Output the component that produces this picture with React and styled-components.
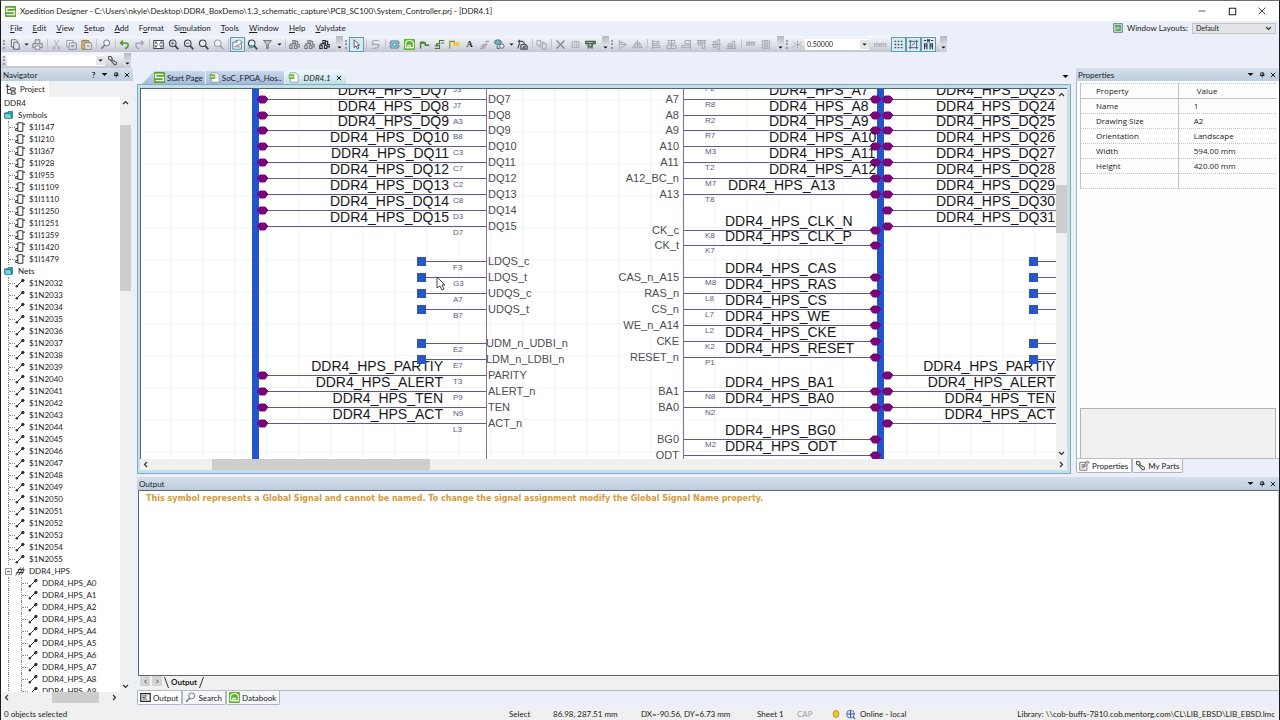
import React, { useState } from "react";
import styled, { createGlobalStyle, css } from "styled-components";

const GlobalStyle = createGlobalStyle`
  * { box-sizing: border-box; }
  body {
    margin: 0;
    overflow: hidden;
    font: 8px/12px Lato, "Open Sans", sans-serif;
    color: #1b1b20;
    background: #ebeffa;
  }
  button, input, select {
    margin: 0;
    padding: 0;
    border: 0;
    background: none;
    font: inherit;
    color: inherit;
  }
  ul { list-style: none; margin: 0; padding: 0; }
  svg { display: block; flex: none; }
`;

// ---------- icons ----------

const dark = "#3c4450";
const grey = "#a3a6b2";
const green = "#5fb52c";

const glass = (color, inner) => (
  <>
    <circle cx="6" cy="5.5" r="4.2" fill="#e8f0f8" stroke={color} strokeWidth="1.4" />
    <path d="M9 8.500 13 13" stroke={color} strokeWidth="2.200" />
    {inner}
  </>
);

const flow = (color) => (
  <path
    d="M1 12h3V8H1zM7 12h3V8H7zM5 5h3V2H5zM2.5 8V6h6v2M8 3h3v4h2v3h-3"
    fill="none"
    stroke={color}
    strokeWidth="1.4"
  />
);

const align = (d) => <path d={d} fill="none" stroke={grey} strokeWidth="1.2" />;

const shapes = {
  logo: (
    <>
      <rect x="0" y="0" width="14" height="14" rx="1" fill="#53a928" />
      <path d="M2 3h10M2 3v4h10v4H2" stroke="#fff" strokeWidth="1.700" fill="none" />
    </>
  ),
  pages: (
    <>
      <path d="M3 1h6l2 2v7H3z" fill="#fff" stroke={dark} />
      <path d="M6 4h4l3 3v6H6z" fill="#dfe6ee" stroke={dark} />
    </>
  ),
  printer: (
    <>
      <path d="M4 6V1h6v5M1 6h12v5H1z" fill="#d8dde4" stroke="#666c78" />
      <path d="M4 9h6v4H4z" fill="#fff" stroke="#666c78" />
    </>
  ),
  cut: <path d="M4 1l5 9M10 1L5 10M3 10h2v3H3zM9 10h2v3H9z" fill="none" stroke={grey} />,
  copy: (
    <>
      <path d="M1 2h8v8H1z" fill="#fff" stroke="#7b8290" />
      <path d="M4 5h9v8H4zM6 8h5M6 10h5" fill="#eef1f5" stroke="#6a7280" />
    </>
  ),
  paste: (
    <>
      <path d="M1 2h9v11H1z" fill="#d9b469" stroke="#8d7443" />
      <path d="M3 1h5v2H3z" fill="#888" />
      <path d="M5 5h8v8H5zM7 8h4M7 10h4" fill="#fff" stroke="#6a7280" />
    </>
  ),
  find: (
    <>
      <circle cx="8.5" cy="5" r="3.8" fill="#eef4fa" stroke="#6b7280" strokeWidth="1.2" />
      <path d="M6 8 1.5 12.5" stroke="#6b7280" strokeWidth="1.8" />
    </>
  ),
  undo: <path d="M5 2 2 5l3 3M2.5 5h6q4 0 3 4-1 3-4 3" fill="none" stroke="#4e9a2c" strokeWidth="2" />,
  redo: <path d="M9 2l3 3-3 3M11.5 5h-6q-4 0-3 4 1 3 4 3" fill="none" stroke={grey} strokeWidth="1.8" />,
  fit: (
    <>
      <path d="M1 2h12v10H1z" fill="#fff" stroke={dark} strokeWidth="1.3" />
      <path d="M3 4l3 2.5M11 4 8 6.5M3 10l3-2.5M11 10 8 7.5M3 6V4h2M9 4h2v2M3 8v2h2M9 10h2V8" stroke={dark} fill="none" />
    </>
  ),
  zoomIn: glass(dark, <path d="M6 3.5v4M4 5.5h4" stroke={dark} />),
  zoomOut: glass(dark, <path d="M4 5.5h4" stroke={dark} />),
  zoom: glass(dark),
  zoomGrey: glass(grey),
  zoomSel: glass(dark, <path d="M1 12l5-5 3 4z" fill="#4aa3a0" />),
  panel: (
    <>
      <path d="M1 4h11v9H1z" fill="#f4f7fa" stroke="#55606c" />
      <path d="M5 4V2h3M9 1l4 3-5 4H5M3 10h7" fill="#fff" stroke="#55606c" />
    </>
  ),
  filter: <path d="M2 2h10L8 7v5H6V7z" fill="#bfc4cd" stroke="#555c68" />,
  flowGrey: flow("#777c88"),
  flowDark: flow("#24282f"),
  pointer: <path d="M4 1v10l2.5-2.3L8 12.5l2-.9-1.700-3.600H11z" fill="#fff" stroke="#333" />,
  swap: <path d="M11 2H6Q2 2 3 5q1 2 5 2t3 3q-1 2-8 2M2 7h10" fill="none" stroke={grey} strokeWidth="1.4" />,
  chip: (
    <>
      <rect x="2.500" y="2.500" width="9" height="9" fill="#a5dbe8" stroke="#2b6f80" />
      <path d="M0 5h2M0 9h2M12 5h2M12 9h2M5 5h4v4H5z" stroke="#2b6f80" fill="#e7f7fb" />
    </>
  ),
  databook: (
    <>
      <rect x="0" y="0" width="14" height="14" rx="1" fill={green} />
      <path d="M2 11V6q0-4 5-4 5 0 5 4v6M5 12V8h3v4M2 11h10" stroke="#fff" strokeWidth="1.4" fill="none" />
    </>
  ),
  net: <path d="M2 12V4M2 5h6v3h5M2 4h5" fill="none" stroke="#447a36" strokeWidth="1.8" />,
  bus: <path d="M1 12h6V8H3V6h4V2h6M1 9h4M9 5h4" fill="none" stroke="#447a36" strokeWidth="1.4" />,
  netName: (
    <>
      <path d="M1 12V3h6v3h6" fill="none" stroke="#7d8c2c" strokeWidth="1.4" />
      <path d="M5 4h8v5H5z" fill="#e9cc4a" />
    </>
  ),
  ripper: <path d="M1 12h4V8h4V3h4M4 7h7M2 10h7" fill="none" stroke={grey} strokeWidth="1.4" />,
  query: (
    <>
      <ellipse cx="5" cy="4" rx="4.500" ry="3" fill="#6fb2bd" stroke="#376b76" />
      <circle cx="10" cy="9" r="2.800" fill="#eef" stroke={dark} />
      <path d="M4 8v4h3" stroke={dark} fill="none" />
    </>
  ),
  hier: <path d="M1 3h6M3 1v5M3 6l-2 6M7 3l3 3M5 7h7M5 7v6h3V9M10 9h3v4h-3z" fill="none" stroke={dark} strokeWidth="1.400" />,
  replace: <path d="M1 2h5v6H1zM8 6h5v7H8zM6 4h4v2M8 10H4V8" fill="none" stroke={grey} strokeWidth="1.2" />,
  remove: <path d="M2 2l10 10M12 2 2 12" stroke="#858a96" strokeWidth="1.8" />,
  array: <path d="M3 3h8v8H3zM1 5h2M1 9h2M11 5h2M11 9h2M6 3v8M8.500 3v8" fill="none" stroke={grey} />,
  verify: (
    <>
      <path d="M1 3h12v3H1zM4 6v6M9 6v6" fill="#8ecb8b" stroke="#333c38" strokeWidth="1.300" />
      <path d="M5 8l2 3 5-8" fill="none" stroke="#2c7b3a" strokeWidth="1.500" />
    </>
  ),
  flipV: align("M3 1v12M5 3l7 4H5zM5 11l6-3"),
  flipH: align("M7 1v12M5 11H1l4-7zM9 11h4L9 4z"),
  alignL: align("M2 1v12M2 3h6v3H2M2 8h9v3H2M10 2v4"),
  alignC: align("M7 1v12M3 2h8v4H3zM1 8h12v4H1z"),
  alignR: align("M12 1v12M5 2h7v4H5zM1 8h11v3H1z"),
  alignT: align("M1 2h12M3 2h3v6H3zM8 2h3v10H8zM1 5h12"),
  alignM: align("M1 7h12M3 3h3v8H3zM8 1h3v12H8z"),
  alignB: align("M1 12h12M3 6h3v6H3zM8 3h3v9H8zM1 9h12"),
  spreadH: align("M1 4h12M2 4v4h2V4M6 4v4h2V4M10 4v4h2V4"),
  spreadV: align("M3 1v12M5 2h5v2H5zM5 6h5v2H5zM5 10h5v2H5zM12 1v12"),
  spacing: align("M1 3l4 4-4 4M13 3 9 7l4 4M7 2v10M5 7h4"),
  dots: (
    <path d="M2 3h2M6 3h2M10 3h2M2 7h2M6 7h2M10 7h2M2 11h2M6 11h2M10 11h2" stroke={dark} strokeWidth="1.800" />
  ),
  frame: <path d="M3 1v12M11 1v12M1 3h12M1 11h12M5 8l4-3" fill="none" stroke="#4f5b73" strokeWidth="1.200" />,
  snap: <path d="M1 2h3M6 2h2M10 2h3M6 0v4M8 0v4M2 6h3v3H2zM9 6h3v3H9zM2 13V9M5 13V9M9 13V9M12 13V9" fill="none" stroke="#2b3242" strokeWidth="1.400" />,
  layouts: (
    <>
      <rect x="1" y="1" width="12" height="12" fill="#c9dbe4" stroke="#48606a" />
      <rect x="3" y="3" width="8" height="8" fill="#43a04a" />
      <path d="M4 10V6l3 3V5l3 4" stroke="#e8f7e8" fill="none" />
    </>
  ),
  sheet: (
    <>
      <path d="M3 1h7l3 3v9H3z" fill="#fbfdf8" stroke="#8a949c" />
      <rect x="1" y="3" width="7" height="6" fill="#6fb544" />
      <path d="M2 6h5M5 11h6" stroke="#fff" />
    </>
  ),
  project: <path d="M3 0v12h4M3 7h3M1 3h5M7 5h6v3H7zM8 10h5v3H8z" fill="none" stroke="#333" strokeWidth="1.200" />,
  folder: (
    <>
      <path d="M1 4h4l1-2h6v9H1z" fill="#35a3ac" stroke="#156a74" />
      <path d="M0 5h9l2 7H2z" fill="#7ad5da" stroke="#156a74" />
    </>
  ),
  symbol: (
    <path d="M4 1h7v12H4zM1 3h3M11 3h3M4 9H1v3h3" fill="none" stroke="#333" strokeWidth="1.400" />
  ),
  wire: (
    <>
      <path d="M2 12 11 3" stroke="#333" strokeWidth="1.400" />
      <circle cx="11" cy="3.500" r="2.300" fill="#333" />
      <circle cx="2.500" cy="11.500" r="1.700" fill="#333" />
    </>
  ),
  bundle: <path d="M1 13 8 2M5 13l7-11M2 9h10M4 5h9M9 12l4-7" stroke="#2d3733" strokeWidth="1.400" />,
  output: (
    <>
      <path d="M1 2h12v10H1z" fill="#fff" stroke="#222" strokeWidth="1.500" />
      <path d="M3 5h6M3 7h4M3 9h6" stroke="#222" />
    </>
  ),
  form: (
    <>
      <path d="M1 3h9v10H1z" fill="#fff" stroke="#555" />
      <path d="M3 6h4M3 8h4M3 10h4M6 7l5-6 2 2-6 6z" stroke="#555" fill="#ddd" />
    </>
  ),
  parts: <path d="M2 2h3l2 3-2 2-3-2zM6 6l5 3M5 7l4 5M9 12q4 1 3-3" fill="none" stroke="#555" strokeWidth="1.400" />,
  bulb: <ellipse cx="7" cy="7" rx="4" ry="5" fill="#f3c72c" stroke="#9b7d16" />,
  globe: (
    <>
      <circle cx="7" cy="6.500" r="5" fill="#dfe8f7" stroke="#46588a" />
      <path d="M2 6.500h10M7 2v9M10 10l3 3" stroke="#46588a" strokeWidth="1.300" />
    </>
  ),
  down: <path d="M1 4h12L7 10z" fill="#111" />,
  pin: <path d="M4 2h7v6H4zM2 8h11M7.500 8v5M9 2v6" fill="none" stroke="#111" strokeWidth="1.800" />,
  close: <path d="M2 2l10 10M12 2 2 12" stroke="#111" strokeWidth="2.200" />,
  chevUp: <path d="M2 10l5-5 5 5" fill="none" stroke="#333" strokeWidth="2.400" />,
  chevDown: <path d="M2 4l5 5 5-5" fill="none" stroke="#333" strokeWidth="2.400" />,
  chevLeft: <path d="M10 2 5 7l5 5" fill="none" stroke="#333" strokeWidth="2.400" />,
  chevRight: <path d="M4 2l5 5-5 5" fill="none" stroke="#333" strokeWidth="2.400" />,
  minimize: <path d="M1 7h12" stroke="#222" strokeWidth="1.300" />,
  maximize: <path d="M2 2h10v10H2z" fill="none" stroke="#222" strokeWidth="1.600" />,
  exit: <path d="M1 1l12 12M13 1 1 13" stroke="#222" strokeWidth="1.500" />,
};

const Icon = ({ name, size = 11 }) => (
  <svg width={size} height={size} viewBox="0 0 14 14" aria-hidden="true">
    {shapes[name]}
  </svg>
);

// ---------- layout ----------

const Window = styled.div`
  display: flex;
  flex-direction: column;
  height: 100vh;
  border: 1px solid #1c1c20;
  border-top-color: #6d6d74;
  border-bottom: 0;
`;

const TitleBar = styled.header`
  display: flex;
  align-items: center;
  height: 20px;
  padding: 0 4px;
  gap: 4px;
  background: #fff;
  flex: none;
  h1 {
    flex: 1;
    margin: 0;
    font-size: 8px;
    font-weight: 400;
    white-space: nowrap;
  }
`;

const WindowButton = styled.button`
  display: grid;
  place-items: center;
  width: 26px;
  height: 20px;
`;

const MenuBar = styled.nav`
  display: flex;
  align-items: center;
  height: 14px;
  flex: none;
  padding: 0 3px 0 5px;
`;

const MenuItem = styled.button`
  padding: 0 4px;
  margin-right: 2px;
`;

const LayoutPicker = styled.label`
  display: flex;
  align-items: center;
  gap: 4px;
  margin-left: auto;
  select {
    appearance: none;
    width: 84px;
    height: 11px;
    padding: 0 3px;
    border: 1px solid #c4c6cc;
    background: #e3e4e8;
    font-size: 7px;
    line-height: 9px;
  }
  svg:last-child {
    margin-left: -15px;
    margin-right: 4px;
  }
`;

const ToolRow = styled.div`
  display: flex;
  height: ${({ $short }) => ($short ? 15 : 16)}px;
  flex: none;
  margin-top: 1px;
`;

const ToolGroup = styled.div`
  display: flex;
  align-items: center;
  height: 100%;
  background: linear-gradient(#f6f7fb, #dcdee6 60%, #c2c5d0);
  border-radius: 2px 3px 3px 2px;
`;

const Grip = styled.span`
  width: 2px;
  height: 9px;
  margin: 0 2px;
  border-left: 2px dotted #9a9eac;
`;

const Separator = styled.span`
  width: 1px;
  height: 10px;
  margin: 0 1px 0 2px;
  background: #c0c3cd;
`;

const ToolButton = styled.button`
  display: grid;
  place-items: center;
  width: ${({ $narrow }) => ($narrow ? 8 : 15)}px;
  height: 15px;
  font: bold 9px/12px "Liberation Serif", serif;
  ${({ $on }) =>
    $on &&
    css`
      border: 1px solid #5f9bb0;
      background: #d8ebf3;
    `}
`;

const GroupEnd = styled.button`
  display: flex;
  justify-content: center;
  align-items: flex-end;
  width: 7px;
  height: 100%;
  margin-left: 4px;
  padding-bottom: 2px;
  background: linear-gradient(#b4b7c2, #dfe1e8 60%, #c8cbd4);
`;

const Unit = styled.span`
  width: 22px;
  text-align: center;
  color: #8e919c;
`;

const Combo = styled.label`
  display: flex;
  align-items: center;
  width: ${({ $width }) => $width}px;
  height: 11px;
  background: #fff;
  input {
    flex: 1;
    min-width: 0;
    height: 11px;
    padding-left: 2px;
    font-size: 7px;
    outline: 0;
  }
  button {
    display: grid;
    place-items: center;
    width: 9px;
    height: 9px;
    background: #e4e6ec;
  }
`;

const Workspace = styled.main`
  display: flex;
  flex: 1;
  min-height: 0;
  gap: 4px;
`;

const Column = styled.div`
  display: flex;
  flex-direction: column;
  flex: 1;
  min-width: 0;
  min-height: 0;
`;

const TopRow = styled.div`
  display: flex;
  flex: 1;
  min-height: 0;
  gap: 5px;
`;

const PanelHead = styled.div`
  display: flex;
  align-items: center;
  height: 13px;
  flex: none;
  padding: 0 1px 0 2px;
  background: linear-gradient(#d6e0ec, #bdccdd);
  h2 {
    flex: 1;
    margin: 0;
    font-size: 8px;
    font-weight: 400;
  }
  button {
    display: grid;
    place-items: center;
    width: 11px;
    height: 11px;
    font-weight: 700;
  }
`;

const Navigator = styled.aside`
  display: flex;
  flex-direction: column;
  width: 132px;
  flex: none;
  background: #f0f0f2;
`;

const ProjectTab = styled.button`
  display: flex;
  align-items: center;
  gap: 4px;
  width: 48px;
  height: 16px;
  padding-left: 4px;
  flex: none;
  background: #fff;
`;

const TreeArea = styled.div`
  display: flex;
  flex: 1;
  min-height: 0;
  margin-right: 2px;
`;

const TreeFoot = styled.div`
  padding: 0 13px 3px 0;
`;

const Tree = styled.ul`
  flex: 1;
  overflow: hidden;
  background: #fff;
`;

const TreeRow = styled.li`
  display: flex;
  align-items: center;
  height: 12px;
  padding-left: 3px;
  white-space: nowrap;
  button {
    display: flex;
    align-items: center;
    gap: 4px;
  }
`;

const Guide = styled.span`
  display: flex;
  align-items: center;
  width: ${({ $through }) => ($through ? 9 : 7)}px;
  height: 12px;
  margin-left: 4px;
  border-left: 1px dotted #8a8a8a;
  &::after {
    content: "";
    flex: 1;
    border-top: ${({ $through }) => ($through ? 0 : 1)}px dotted #8a8a8a;
  }
`;

const Toggle = styled.span`
  width: 7px;
  height: 7px;
  margin-left: 1px;
  margin-right: 3px;
  border: 1px solid #999;
  background: linear-gradient(#555, #555) center / 3px 1px no-repeat #fff;
`;

const Bar = styled.div`
  display: flex;
  flex-direction: ${({ $vertical }) => ($vertical ? "column" : "row")};
  ${({ $vertical }) => ($vertical ? "width" : "height")}: 11px;
  flex: none;
  background: #f0f0f0;
  button {
    display: grid;
    place-items: center;
    width: 11px;
    height: 11px;
    flex: none;
  }
`;

const Stretch = styled.span`
  flex: ${({ $grow }) => $grow} 1 0;
  background: ${({ $thumb }) => ($thumb ? "#cdcdcd" : "transparent")};
`;

const Documents = styled.section`
  display: flex;
  flex-direction: column;
  flex: 1;
  min-width: 0;
`;

const DocTabs = styled.div`
  display: flex;
  align-items: flex-end;
  height: 16px;
  flex: none;
  padding-left: 5px;
  & > button:last-child {
    margin: 0 2px 4px auto;
  }
`;

const DocTab = styled.button`
  display: flex;
  align-items: center;
  gap: 2px;
  height: 13px;
  padding: 0 2px 0 ${({ $first }) => ($first ? 12 : 3)}px;
  margin-right: 1px;
  white-space: nowrap;
  border-radius: 0 3px 0 0;
  background: linear-gradient(#c8d8ec, #a3bbdb);
  clip-path: ${({ $first }) => ($first ? "polygon(12px 0, 100% 0, 100% 100%, 0 100%)" : "none")};
  ${({ $active }) =>
    $active &&
    css`
      gap: 5px;
      padding-right: 4px;
      font-style: italic;
      background: linear-gradient(#eef8fb, #bfe0e8);
    `}
`;

const Frame = styled.div`
  display: flex;
  flex-direction: column;
  flex: 1;
  min-height: 0;
  padding: 3px 3px 3px 2px;
  border: 1px solid #86a9bb;
  background: #c3e0ea;
`;

const View = styled.div`
  display: flex;
  flex: 1;
  min-height: 0;
  border-top: 1px solid #56636c;
  border-left: 1px solid #56636c;
`;

const Canvas = styled.div`
  flex: 1;
  min-width: 0;
  overflow: hidden;
  background: #fff;
  svg {
    width: 100%;
    height: 100%;
  }
`;

const Properties = styled.aside`
  display: flex;
  flex-direction: column;
  width: 203px;
  flex: none;
`;

const PropertyBody = styled.div`
  display: flex;
  flex-direction: column;
  flex: 1;
  min-height: 0;
  padding: 2px 3px 0;
  border-left: 1px solid #aeb4bd;
  background: #fdfdfd;
`;

const PropertyTable = styled.table`
  width: 100%;
  table-layout: fixed;
  border-collapse: collapse;
  font-family: "Open Sans", sans-serif;
  th,
  td {
    height: 15px;
    padding: 0 0 0 15px;
    font-weight: 400;
    text-align: left;
    line-height: 12px;
    border: 1px solid #c3c3c6;
    border-style: dotted solid;
    border-right: 0;
  }
  th {
    border-bottom-style: solid;
  }
  th:last-child {
    padding-left: 18px;
  }
`;

const Description = styled.div`
  height: 50px;
  margin-top: auto;
  border: 1px solid #b3b3b6;
  border-bottom: 0;
  background: #f0f0f0;
`;

const PanelTabs = styled.div`
  display: flex;
  height: 16px;
  flex: none;
  border-top: 1px solid #b9bcc4;
`;

const PanelTab = styled.button`
  display: flex;
  align-items: center;
  gap: 2px;
  height: 14px;
  padding: 0 3px 0 2px;
  border: 1px solid #b3b6be;
  border-top: 0;
  border-radius: 0 0 2px 2px;
  background: ${({ $active }) => ($active ? "#fff" : "#f5f6f9")};
`;

const OutputPanel = styled.section`
  display: flex;
  flex-direction: column;
  height: 229px;
  flex: none;
  margin-top: 3px;
`;

const Log = styled.div`
  flex: 1;
  margin-left: 1px;
  padding: 1px 7px;
  border: 1px solid #63666c;
  border-right-color: #c4c4c8;
  background: #fff;
  p {
    margin: 0;
    font: bold 8px/14px "DejaVu Sans", sans-serif;
    color: #d59a3a;
  }
`;

const LogTabs = styled.div`
  display: flex;
  align-items: flex-start;
  height: 14px;
  flex: none;
  padding-left: 3px;
  gap: 2px;
  background: #f0f0f0;
  button {
    display: flex;
    align-items: center;
    justify-content: center;
    width: 10px;
    height: 10px;
    background: #d4d4d6;
  }
`;

const LogTab = styled.span`
  display: flex;
  align-items: center;
  && button {
    width: auto;
    height: 12px;
    padding: 0 2px;
    background: none;
    font-weight: 700;
  }
  &::before,
  &::after {
    content: "";
    width: 1px;
    height: 11px;
    margin: 0 2px;
    background: #333;
    transform: skewX(20deg);
  }
  &::after {
    transform: skewX(-20deg);
  }
`;

const StatusBar = styled.footer`
  display: flex;
  align-items: center;
  height: 14px;
  flex: none;
  padding: 2px 4px 0 3px;
  background: #f0f0f1;
  white-space: nowrap;
`;

const StatusCell = styled.span`
  display: flex;
  align-items: center;
  gap: 4px;
  ${({ $width }) => ($width ? `width: ${$width}px;` : "flex: 1;")}
  color: ${({ $dim }) => ($dim ? "#9a9aa0" : "inherit")};
`;

const LibraryCell = styled(StatusCell)`
  justify-content: flex-end;
`;

// ---------- data ----------

// "_" stands before the access key
const menus = [
  "_File",
  "_Edit",
  "_View",
  "_Setup",
  "_Add",
  "F_ormat",
  "Si_mulation",
  "_Tools",
  "_Window",
  "_Help",
  "_Valydate",
];

// "|" is a separator, "v" a drop-down arrow, "*" marks a pressed button
const toolGroups = [
  "pages v printer | cut copy paste | find | undo redo | fit zoomIn zoomOut zoom zoomGrey | *panel zoomSel filter v | flowGrey flowGrey flowDark",
  "*pointer | swap | chip databook net bus netName text ripper query v hier | replace | remove array verify",
  "flipV flipH | alignL alignC alignR alignT alignM alignB | spreadH spreadV",
];

const symbols = ["147", "210", "367", "928", "955", "1109", "1110", "1250", "1251", "1359", "1420", "1479"];
const nets = [
  2032, 2033, 2034, 2035, 2036, 2037, 2038, 2039, 2040, 2041, 2042, 2043, 2044, 2045, 2046, 2047, 2048, 2049,
  2050, 2051, 2052, 2053, 2054, 2055,
];
const addresses = [0, 1, 2, 3, 4, 5, 6, 7, 8, 9];

const properties = [
  ["Name", "1"],
  ["Drawing Size", "A2"],
  ["Orientation", "Landscape"],
  ["Width", "594.00 mm"],
  ["Height", "420.00 mm"],
  ["", ""],
];

// y, pin name, pin number, net on the first device, net on the second device
const dataPins = [
  [-6, "DQ6", "J3"],
  [10, "DQ7", "J7", "DQ7", "DQ23"],
  [26, "DQ8", "A3", "DQ8", "DQ24"],
  [41, "DQ9", "B8", "DQ9", "DQ25"],
  [57, "DQ10", "C3", "DQ10", "DQ26"],
  [73, "DQ11", "C7", "DQ11", "DQ27"],
  [89, "DQ12", "C2", "DQ12", "DQ28"],
  [105, "DQ13", "C8", "DQ13", "DQ29"],
  [121, "DQ14", "D3", "DQ14", "DQ30"],
  [137, "DQ15", "D7", "DQ15", "DQ31"],
  [286, "PARITY", "T3", "PARTIY", "PARTIY"],
  [302, "ALERT_n", "P9", "ALERT", "ALERT"],
  [318, "TEN", "N9", "TEN", "TEN"],
  [334, "ACT_n", "L3", "ACT", "ACT"],
];

const openPins = [
  [172, "LDQS_c", "F3"],
  [188, "LDQS_t", "G3"],
  [204, "UDQS_c", "A7"],
  [220, "UDQS_t", "B7"],
  [254, "UDM_n_UDBI_n", "E2"],
  [270, "LDM_n_LDBI_n", "E7"],
];

const controlPins = [
  [-6, "A6", "P2"],
  [10, "A7", "R8", "A7", 628],
  [26, "A8", "R2", "A8", 628],
  [41, "A9", "R7", "A9", 628],
  [57, "A10", "M3", "A10", 628],
  [73, "A11", "T2", "A11", 628],
  [89, "A12_BC_n", "M7", "A12", 628],
  [105, "A13", "T8", "A13", 587],
  [141, "CK_c", "K8", "CLK_N", 584],
  [156, "CK_t", "K7", "CLK_P", 584],
  [188, "CAS_n_A15", "M8", "CAS", 584],
  [204, "RAS_n", "L8", "RAS", 584],
  [220, "CS_n", "L7", "CS", 584],
  [236, "WE_n_A14", "L2", "WE", 584],
  [252, "CKE", "K2", "CKE", 584],
  [268, "RESET_n", "P1", "RESET", 584],
  [302, "BA1", "N8", "BA1", 584],
  [318, "BA0", "N2", "BA0", 584],
  [350, "BG0", "M2", "BG0", 584],
  [366, "ODT", "", "ODT", 584],
];

// ---------- schematic ----------

const Net = styled.text`
  font: 14px "Liberation Sans", sans-serif;
  fill: #17171a;
`;

const Pin = styled.text`
  font: 11px "Liberation Sans", sans-serif;
  fill: #4c4c52;
`;

const PinNumber = styled.text`
  font: 8px "Liberation Sans", sans-serif;
  fill: #56607c;
`;

const Wire = styled.path`
  fill: none;
  stroke: ${({ $body }) => ($body ? "#8b6f95" : "#5d5c8c")};
  shape-rendering: crispEdges;
`;

const Joint = ({ x, y }) => (
  <path d={`M${x - 5} ${y}l3-3h5l3 3-3 4h-5z`} fill="#78087a" stroke="#78087a" strokeLinejoin="round" />
);

const Stub = ({ x, y }) => <rect x={x - 4} y={y - 4} width="9" height="9" fill="#2a55c4" />;

const Schematic = () => (
  <svg role="img" aria-label="DDR4.1 schematic sheet">
    <defs>
      <pattern id="grid" x="29" y="10" width="32" height="32" patternUnits="userSpaceOnUse">
        <path d="M0 .5h32M.5 0v32" stroke="#f6f5f6" />
      </pattern>
    </defs>
    <rect width="100%" height="100%" fill="url(#grid)" />
    <Wire $body d="M345.5 0V370M542.5 0V370" />
    <rect x="111" width="7" height="370" fill="#2453cf" />
    <rect x="736" width="7" height="370" fill="#2453cf" />

    {dataPins.map(([y, name, number, net, mirror]) => (
      <g key={name}>
        <PinNumber x="312" y={y + 9}>{number}</PinNumber>
        <Pin x="347" y={y + 4}>{name}</Pin>
        {net && (
          <>
            <Wire d={`M121 ${y + 0.5}H345M746 ${y + 0.5}H916`} />
            <Joint x={121} y={y} />
            <Joint x={746} y={y} />
            <Net x={y > 200 ? 302 : 308} y={y - 4} textAnchor="end">{`DDR4_HPS_${net}`}</Net>
            <Net x="914" y={y - 4} textAnchor="end">{`DDR4_HPS_${mirror}`}</Net>
          </>
        )}
      </g>
    ))}

    {openPins.map(([y, name, number]) => (
      <g key={name}>
        <Wire d={`M284 ${y + 0.5}H345M896 ${y + 0.5}H916`} />
        <Stub x={280} y={y} />
        <Stub x={892} y={y} />
        <PinNumber x="312" y={y + 9}>{number}</PinNumber>
        <Pin x={name.length > 8 ? 345 : 347} y={y + 4}>{name}</Pin>
      </g>
    ))}

    {controlPins.map(([y, name, number, net, x]) => (
      <g key={name}>
        <PinNumber x="564" y={y + 8}>{number}</PinNumber>
        <Pin x="538" y={y + 4} textAnchor="end">{name}</Pin>
        {net && (
          <>
            <Wire d={`M543 ${y + 0.5}H734`} />
            <Joint x={734} y={y} />
            <Net x={x} y={y - 4}>{`DDR4_HPS_${net}`}</Net>
          </>
        )}
      </g>
    ))}

    <path d="M296 188v11l3-2 2 4 2-1-2-4h3z" fill="#fff" stroke="#444" />
  </svg>
);

// ---------- parts ----------

const ScrollBar = ({ vertical, before, thumb, after }) => (
  <Bar $vertical={vertical}>
    <button aria-label="Scroll back">
      <Icon name={vertical ? "chevUp" : "chevLeft"} size={7} />
    </button>
    <Stretch $grow={before} />
    <Stretch $grow={thumb} $thumb />
    <Stretch $grow={after} />
    <button aria-label="Scroll forward">
      <Icon name={vertical ? "chevDown" : "chevRight"} size={7} />
    </button>
  </Bar>
);

const PanelHeader = ({ title, help }) => (
  <PanelHead>
    <h2>{title}</h2>
    {help && <button>?</button>}
    <button aria-label="Panel menu"><Icon name="down" size={7} /></button>
    <button aria-label="Pin panel"><Icon name="pin" size={6} /></button>
    <button aria-label="Close panel"><Icon name="close" size={6} /></button>
  </PanelHead>
);

const Tools = ({ items }) =>
  items.split(" ").map((item, i) => {
    if (item === "|") return <Separator key={i} />;
    if (item === "v") {
      return (
        <ToolButton key={i} $narrow aria-label="More">
          <Icon name="down" size={5} />
        </ToolButton>
      );
    }
    const name = item.replace("*", "");
    return (
      <ToolButton key={i} $on={item !== name} aria-label={name}>
        {name === "text" ? "A" : <Icon name={name} />}
      </ToolButton>
    );
  });

const End = () => (
  <GroupEnd aria-label="Toolbar options">
    <Icon name="down" size={5} />
  </GroupEnd>
);

const Menu = ({ label }) => {
  const [before, after] = label.split("_");
  return (
    <MenuItem>
      {before}
      <u>{after[0]}</u>
      {after.slice(1)}
    </MenuItem>
  );
};

const TreeItem = ({ icon, label, level = 1, toggle }) => (
  <TreeRow>
    {level === 2 && <Guide $through />}
    {toggle ? <Toggle /> : level > 0 && <Guide />}
    <button>
      {icon && <Icon name={icon} size={10} />}
      {label}
    </button>
  </TreeRow>
);

const App = () => {
  const [grid, setGrid] = useState("0.50000");
  const [search, setSearch] = useState("");

  return (
    <Window>
      <GlobalStyle />
      <TitleBar>
        <Icon name="logo" />
        <h1>
          {"Xpedition Designer - C:\\Users\\nkyle\\Desktop\\DDR4_BoxDemo\\1.3_schematic_capture\\PCB_SC100\\System_Controller.prj - [DDR4.1]"}
        </h1>
        <WindowButton aria-label="Minimize"><Icon name="minimize" size={8} /></WindowButton>
        <WindowButton aria-label="Maximize"><Icon name="maximize" size={9} /></WindowButton>
        <WindowButton aria-label="Close"><Icon name="exit" size={8} /></WindowButton>
      </TitleBar>

      <MenuBar>
        {menus.map((label) => (
          <Menu key={label} label={label} />
        ))}
        <LayoutPicker>
          <Icon name="layouts" size={10} />
          Window Layouts:
          <select defaultValue="Default">
            <option>Default</option>
          </select>
          <Icon name="chevDown" size={7} />
        </LayoutPicker>
      </MenuBar>

      <ToolRow>
        {toolGroups.map((items) => (
          <ToolGroup key={items}>
            <Grip />
            <Tools items={items} />
            <End />
          </ToolGroup>
        ))}
        <ToolGroup>
          <Grip />
          <Tools items="spacing" />
          <Combo $width={64}>
            <input aria-label="Grid spacing" value={grid} onChange={(e) => setGrid(e.target.value)} />
            <button aria-label="Spacing list"><Icon name="down" size={5} /></button>
          </Combo>
          <Unit>mm</Unit>
          <Tools items="*dots *frame *snap" />
          <End />
        </ToolGroup>
      </ToolRow>

      <ToolRow $short>
        <ToolGroup>
          <Grip />
          <Combo $width={98}>
            <input aria-label="Find" value={search} onChange={(e) => setSearch(e.target.value)} />
            <button aria-label="Find list"><Icon name="down" size={5} /></button>
          </Combo>
          <Tools items="parts" />
          <End />
        </ToolGroup>
      </ToolRow>

      <Workspace>
        <Navigator>
          <PanelHeader title="Navigator" help />
          <ProjectTab>
            <Icon name="project" />
            Project
          </ProjectTab>
          <TreeArea>
            <Tree>
              <TreeItem level={0} label="DDR4" />
              <TreeItem level={0} icon="folder" label="Symbols" />
              {symbols.map((id) => (
                <TreeItem key={id} icon="symbol" label={`$1I${id}`} />
              ))}
              <TreeItem level={0} icon="folder" label="Nets" />
              {nets.map((id) => (
                <TreeItem key={id} icon="wire" label={`$1N${id}`} />
              ))}
              <TreeItem toggle icon="bundle" label="DDR4_HPS" />
              {addresses.map((n) => (
                <TreeItem key={n} level={2} icon="wire" label={`DDR4_HPS_A${n}`} />
              ))}
            </Tree>
            <ScrollBar vertical before={17} thumb={165} after={389} />
          </TreeArea>
          <TreeFoot>
            <ScrollBar before={40} thumb={47} after={10} />
          </TreeFoot>
        </Navigator>

        <Column>
          <TopRow>
            <Documents>
              <DocTabs>
                <DocTab $first>
                  <Icon name="logo" />
                  Start Page
                </DocTab>
                <DocTab>
                  <Icon name="sheet" />
                  SoC_FPGA_Hos..
                </DocTab>
                <DocTab $active>
                  <Icon name="sheet" />
                  DDR4.1
                  <Icon name="close" size={6} />
                </DocTab>
                <button aria-label="Open documents"><Icon name="down" size={7} /></button>
              </DocTabs>
              <Frame>
                <View>
                  <Canvas>
                    <Schematic />
                  </Canvas>
                  <ScrollBar vertical before={85} thumb={48} after={214} />
                </View>
                <ScrollBar before={60} thumb={215} after={617} />
              </Frame>
            </Documents>

            <Properties>
              <PanelHeader title="Properties" />
              <PropertyBody>
                <PropertyTable>
                  <thead>
                    <tr>
                      <th>Property</th>
                      <th>Value</th>
                    </tr>
                  </thead>
                  <tbody>
                    {properties.map(([name, value]) => (
                      <tr key={name}>
                        <td>{name}</td>
                        <td>{value}</td>
                      </tr>
                    ))}
                  </tbody>
                </PropertyTable>
                <Description />
              </PropertyBody>
              <PanelTabs>
                <PanelTab $active><Icon name="form" /> Properties</PanelTab>
                <PanelTab><Icon name="parts" /> My Parts</PanelTab>
              </PanelTabs>
            </Properties>
          </TopRow>

          <OutputPanel>
            <PanelHeader title="Output" />
            <Log>
              <p>
                This symbol represents a Global Signal and cannot be named. To change the signal assignment modify the
                Global Signal Name property.
              </p>
            </Log>
            <LogTabs>
              <button aria-label="Previous tab"><Icon name="chevLeft" size={5} /></button>
              <button aria-label="Next tab"><Icon name="chevRight" size={5} /></button>
              <LogTab>
                <button>Output</button>
              </LogTab>
            </LogTabs>
            <PanelTabs>
              <PanelTab $active><Icon name="output" /> Output</PanelTab>
              <PanelTab><Icon name="find" /> Search</PanelTab>
              <PanelTab><Icon name="databook" /> Databook</PanelTab>
            </PanelTabs>
          </OutputPanel>
        </Column>
      </Workspace>

      <StatusBar>
        <StatusCell>0 objects selected</StatusCell>
        <StatusCell $width={44}>Select</StatusCell>
        <StatusCell $width={88}>86.98, 287.51 mm</StatusCell>
        <StatusCell $width={116}>DX=-90.56, DY=6.73 mm</StatusCell>
        <StatusCell $width={40}>Sheet 1</StatusCell>
        <StatusCell $width={34} $dim>CAP</StatusCell>
        <StatusCell $width={160}>
          <Icon name="bulb" size={10} />
          <Icon name="globe" size={11} />
          Online - local
        </StatusCell>
        <LibraryCell $width={284}>
          {"Library: \\\\cob-buffs-7810.cob.mentorg.com\\CL\\LIB_EBSD\\LIB_EBSD.lmc"}
        </LibraryCell>
      </StatusBar>
    </Window>
  );
};

export default App;
